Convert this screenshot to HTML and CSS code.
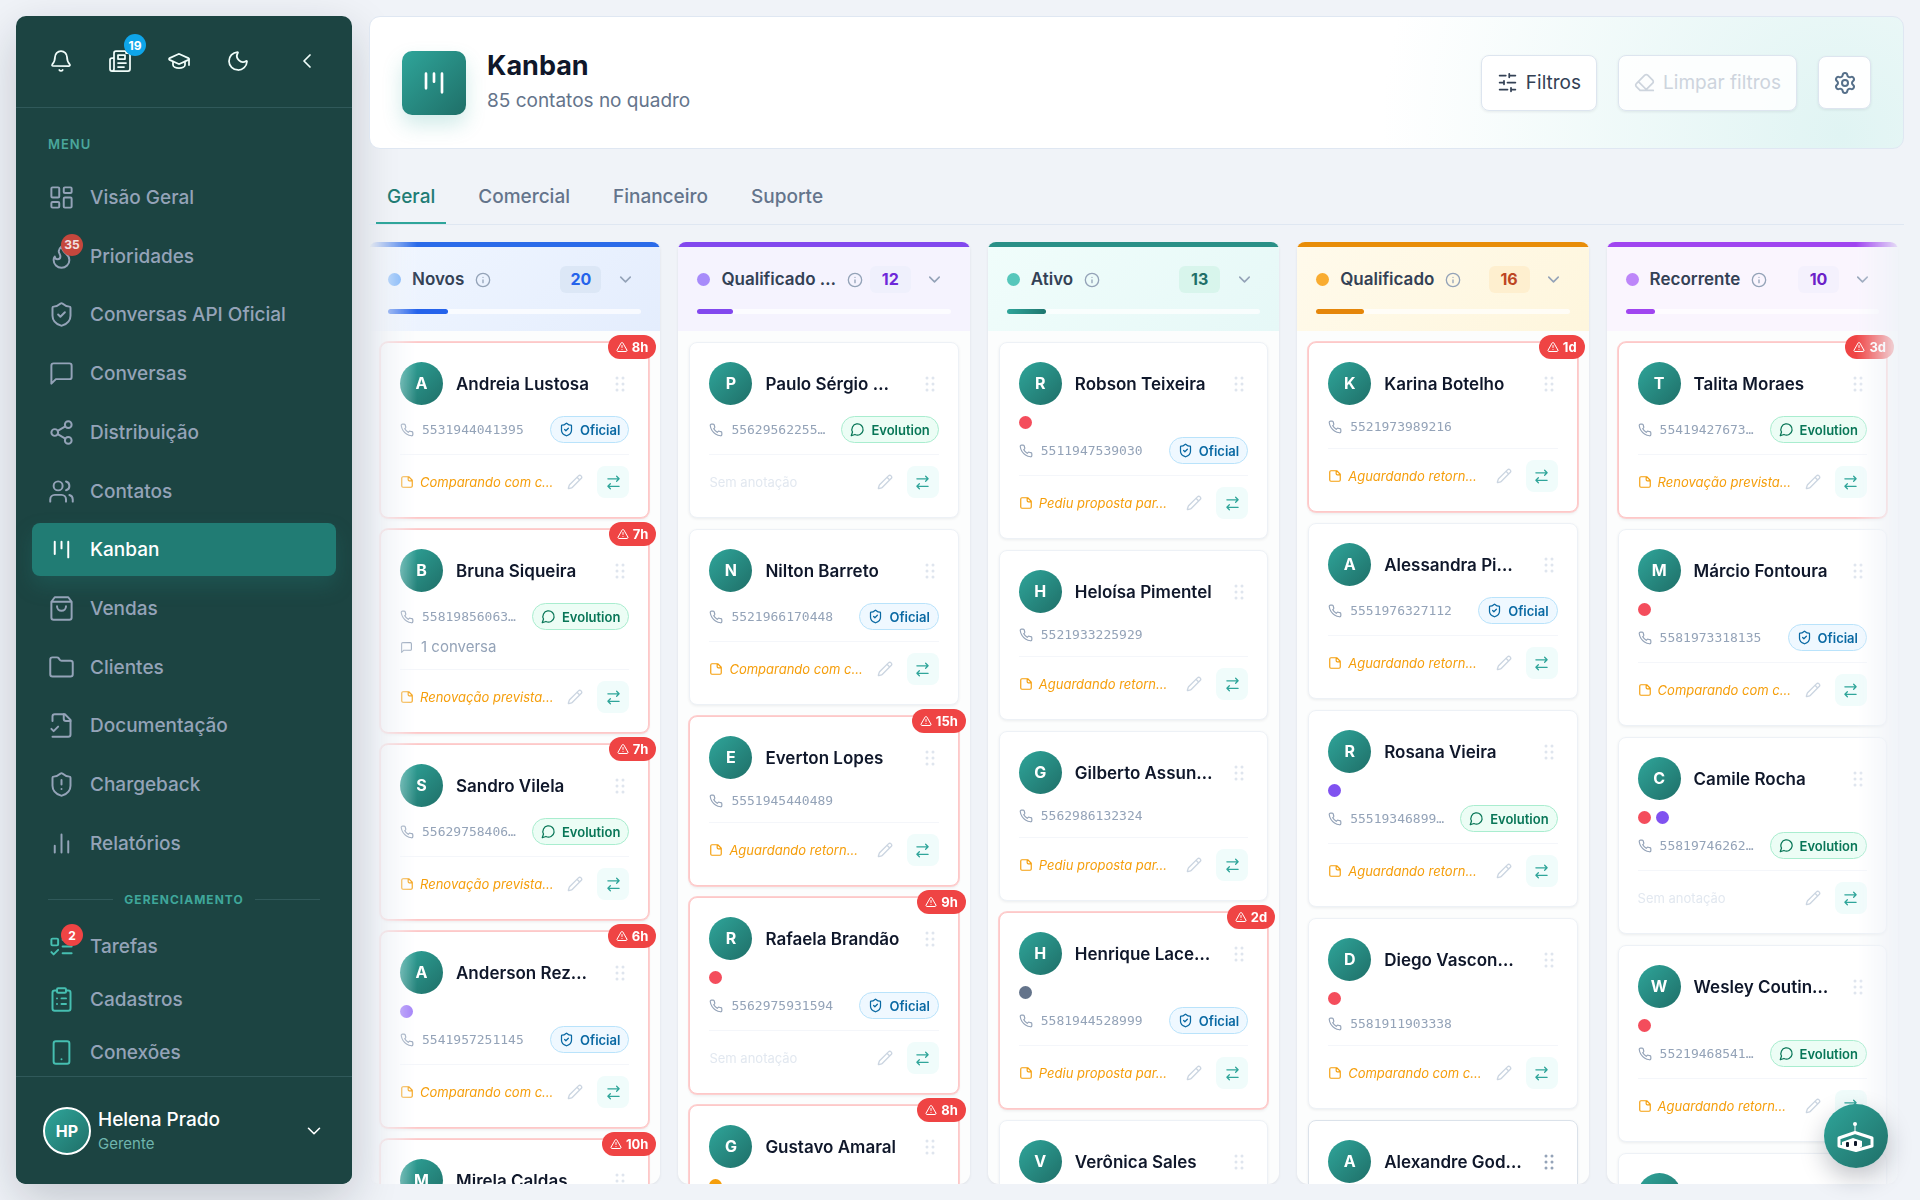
FILE: index.html
```html
<!DOCTYPE html>
<html lang="pt-br">
<head>
    <meta charset="UTF-8">
    <meta name="viewport" content="width=device-width, initial-scale=1.0">
    <title>Kanban</title>
    <link rel="stylesheet" href="styles.css">
</head>
<body>

    <!-- Ícones -->
    <svg class="sprite" aria-hidden="true">
        <symbol id="i-bell" viewBox="0 0 24 24"><path d="M10.3 21a2 2 0 0 0 3.4 0"/><path d="M3.3 15.3A1 1 0 0 0 4 17h16a1 1 0 0 0 .7-1.7C19.4 14 18 12.500 18 8A6 6 0 0 0 6 8c0 4.500-1.400 6-2.700 7.300"/></symbol>
        <symbol id="i-news" viewBox="0 0 24 24"><path d="M4 22h16a2 2 0 0 0 2-2V6a2 2 0 0 0-2-2h-2V3a1 1 0 0 0-1-1H8a2 2 0 0 0-2 2v16a2 2 0 0 1-4 0v-9c0-1.100.9-2 2-2h2"/><path d="M10 6h7v4h-7zM10 14h8M10 18h6"/></symbol>
        <symbol id="i-cap" viewBox="0 0 24 24"><path d="M21.400 10.900a1 1 0 0 0 0-1.800L12.800 5.200a2 2 0 0 0-1.700 0L2.600 9.100a1 1 0 0 0 0 1.800l8.600 3.900a2 2 0 0 0 1.700 0z"/><path d="M22 10v6"/><path d="M6 12.500V16a6 3 0 0 0 12 0v-3.500"/></symbol>
        <symbol id="i-moon" viewBox="0 0 24 24"><path d="M20.985 12.486a9 9 0 1 1-9.473-9.472c.405-.022.617.46.402.803a6 6 0 0 0 8.268 8.268c.344-.215.825-.004.803.401"/></symbol>
        <symbol id="i-left" viewBox="0 0 24 24"><path d="m15 18-6-6 6-6"/></symbol>
        <symbol id="i-down" viewBox="0 0 24 24"><path d="m6 9 6 6 6-6"/></symbol>
        <symbol id="i-dash" viewBox="0 0 24 24"><rect x="3" y="3" width="7" height="9" rx="1"/><rect x="14" y="3" width="7" height="5" rx="1"/><rect x="14" y="12" width="7" height="9" rx="1"/><rect x="3" y="16" width="7" height="5" rx="1"/></symbol>
        <symbol id="i-flame" viewBox="0 0 24 24"><path d="M8.500 14.500A2.500 2.500 0 0 0 11 12c0-1.380-.5-2-1-3-1.072-2.143-.224-4.054 2-6 .5 2.500 2 4.900 4 6.500 2 1.600 3 3.500 3 5.500a7 7 0 1 1-14 0c0-1.153.433-2.294 1-3a2.500 2.500 0 0 0 2.500 2.500z"/></symbol>
        <symbol id="i-shield-check" viewBox="0 0 24 24"><path d="M20 13c0 5-3.500 7.500-7.660 8.950a1 1 0 0 1-.67-.01C7.500 20.500 4 18 4 13V6a1 1 0 0 1 1-1c2 0 4.500-1.200 6.240-2.720a1.170 1.170 0 0 1 1.520 0C14.510 3.810 17 5 19 5a1 1 0 0 1 1 1z"/><path d="m9 12 2 2 4-4"/></symbol>
        <symbol id="i-shield-alert" viewBox="0 0 24 24"><path d="M20 13c0 5-3.500 7.500-7.660 8.950a1 1 0 0 1-.67-.01C7.500 20.500 4 18 4 13V6a1 1 0 0 1 1-1c2 0 4.500-1.200 6.240-2.720a1.170 1.170 0 0 1 1.520 0C14.510 3.810 17 5 19 5a1 1 0 0 1 1 1z"/><path d="M12 8v4M12 16h.01"/></symbol>
        <symbol id="i-message" viewBox="0 0 24 24"><path d="M21 15a2 2 0 0 1-2 2H7l-4 4V5a2 2 0 0 1 2-2h14a2 2 0 0 1 2 2z"/></symbol>
        <symbol id="i-share" viewBox="0 0 24 24"><circle cx="18" cy="5" r="3"/><circle cx="6" cy="12" r="3"/><circle cx="18" cy="19" r="3"/><path d="m8.600 13.500 6.800 4M15.400 6.500l-6.800 4"/></symbol>
        <symbol id="i-users" viewBox="0 0 24 24"><path d="M16 21v-2a4 4 0 0 0-4-4H6a4 4 0 0 0-4 4v2"/><circle cx="9" cy="7" r="4"/><path d="M22 21v-2a4 4 0 0 0-3-3.870M16 3.130a4 4 0 0 1 0 7.750"/></symbol>
        <symbol id="i-kanban" viewBox="0 0 24 24"><path d="M6 5v11M12 5v6M18 5v14"/></symbol>
        <symbol id="i-bag" viewBox="0 0 24 24"><path d="M6 2 3 6v14a2 2 0 0 0 2 2h14a2 2 0 0 0 2-2V6l-3-4zM3 6h18"/><path d="M16 10a4 4 0 0 1-8 0"/></symbol>
        <symbol id="i-folder" viewBox="0 0 24 24"><path d="M20 20a2 2 0 0 0 2-2V8a2 2 0 0 0-2-2h-7.900a2 2 0 0 1-1.690-.9L9.600 3.900A2 2 0 0 0 7.930 3H4a2 2 0 0 0-2 2v13a2 2 0 0 0 2 2z"/></symbol>
        <symbol id="i-file-check" viewBox="0 0 24 24"><path d="M4 22h14a2 2 0 0 0 2-2V7l-5-5H6a2 2 0 0 0-2 2v4"/><path d="M14 2v4a2 2 0 0 0 2 2h4M3 15l2 2 4-4"/></symbol>
        <symbol id="i-bars" viewBox="0 0 24 24"><path d="M18 20V10M12 20V4M6 20v-6"/></symbol>
        <symbol id="i-todo" viewBox="0 0 24 24"><rect x="3" y="5" width="6" height="6" rx="1"/><path d="m3 17 2 2 4-4M13 6h8M13 12h8M13 18h8"/></symbol>
        <symbol id="i-clipboard" viewBox="0 0 24 24"><rect x="8" y="2" width="8" height="4" rx="1"/><path d="M16 4h2a2 2 0 0 1 2 2v14a2 2 0 0 1-2 2H6a2 2 0 0 1-2-2V6a2 2 0 0 1 2-2h2M12 11h4M12 16h4M8 11h.01M8 16h.01"/></symbol>
        <symbol id="i-phone-device" viewBox="0 0 24 24"><rect x="5" y="2" width="14" height="20" rx="2"/><path d="M12 18h.01"/></symbol>
        <symbol id="i-sliders" viewBox="0 0 24 24"><path d="M21 4h-7M10 4H3M21 12h-9M8 12H3M21 20h-5M12 20H3M14 2v4M8 10v4M16 18v4"/></symbol>
        <symbol id="i-eraser" viewBox="0 0 24 24"><path d="m7 21-4.300-4.300c-1-1-1-2.500 0-3.400l9.600-9.600c1-1 2.500-1 3.400 0l5.600 5.600c1 1 1 2.500 0 3.400L13 21M22 21H7M5 11l9 9"/></symbol>
        <symbol id="i-gear" viewBox="0 0 24 24"><path d="M9.670 4.140a2.340 2.340 0 0 1 4.660 0 2.340 2.340 0 0 0 3.320 1.910 2.340 2.340 0 0 1 2.330 4.030 2.340 2.340 0 0 0 0 3.830 2.340 2.340 0 0 1-2.330 4.030 2.340 2.340 0 0 0-3.320 1.920 2.340 2.340 0 0 1-4.660 0 2.340 2.340 0 0 0-3.320-1.910 2.340 2.340 0 0 1-2.330-4.030 2.340 2.340 0 0 0 0-3.830 2.340 2.340 0 0 1 2.330-4.030 2.340 2.340 0 0 0 3.320-1.910"/><circle cx="12" cy="12" r="3"/></symbol>
        <symbol id="i-info" viewBox="0 0 24 24"><circle cx="12" cy="12" r="10"/><path d="M12 16v-4M12 8h.01"/></symbol>
        <symbol id="i-alert" viewBox="0 0 24 24"><path d="m21.730 18-8-14a2 2 0 0 0-3.480 0l-8 14A2 2 0 0 0 4 21h16a2 2 0 0 0 1.730-3M12 9v4M12 17h.01"/></symbol>
        <symbol id="i-grip" viewBox="0 0 24 24"><path d="M8 4h.01M8 12h.01M8 20h.01M16 4h.01M16 12h.01M16 20h.01"/></symbol>
        <symbol id="i-phone" viewBox="0 0 24 24"><path d="M22 16.920v3a2 2 0 0 1-2.180 2 19.790 19.790 0 0 1-8.630-3.070 19.500 19.500 0 0 1-6-6 19.790 19.790 0 0 1-3.070-8.670A2 2 0 0 1 4.110 2h3a2 2 0 0 1 2 1.720 12.840 12.840 0 0 0 .7 2.810 2 2 0 0 1-.45 2.110L8.090 9.910a16 16 0 0 0 6 6l1.270-1.270a2 2 0 0 1 2.110-.45 12.840 12.840 0 0 0 2.810.7A2 2 0 0 1 22 16.920z"/></symbol>
        <symbol id="i-bubble" viewBox="0 0 24 24"><path d="M7.900 20A9 9 0 1 0 4 16.100L2 22z"/></symbol>
        <symbol id="i-note" viewBox="0 0 24 24"><path d="M15 3H5a2 2 0 0 0-2 2v14a2 2 0 0 0 2 2h14a2 2 0 0 0 2-2V9zM14 3v5a2 2 0 0 0 2 2h5"/></symbol>
        <symbol id="i-pencil" viewBox="0 0 24 24"><path d="M21.170 6.810a1 1 0 0 0-3.980-3.980L3.840 16.170a2 2 0 0 0-.5.830l-1.320 4.350a.5.5 0 0 0 .62.620l4.350-1.320a2 2 0 0 0 .83-.5zM15 5l4 4"/></symbol>
        <symbol id="i-swap" viewBox="0 0 24 24"><path d="m17 2 4 4-4 4M3 6h18M7 22l-4-4 4-4M21 18H3"/></symbol>
    </svg>

    <!-- Menu lateral -->
    <aside class="sidebar">
        <div class="sidebar-top">
            <button class="top-btn" aria-label="Notificações"><svg class="icon"><use href="#i-bell"/></svg></button>
            <button class="top-btn" aria-label="Novidades"><svg class="icon"><use href="#i-news"/></svg><span class="badge badge-blue">19</span></button>
            <button class="top-btn" aria-label="Treinamentos"><svg class="icon"><use href="#i-cap"/></svg></button>
            <button class="top-btn" aria-label="Tema"><svg class="icon"><use href="#i-moon"/></svg></button>
            <button class="top-btn top-btn-end" aria-label="Recolher"><svg class="icon"><use href="#i-left"/></svg></button>
        </div>

        <nav class="menu">
            <p class="menu-label">MENU</p>
            <ul class="menu-list">
                <li><a class="menu-item" href="#"><span class="menu-icon"><svg class="icon"><use href="#i-dash"/></svg></span>Visão Geral</a></li>
                <li><a class="menu-item" href="#"><span class="menu-icon"><svg class="icon"><use href="#i-flame"/></svg><span class="badge badge-muted">35</span></span>Prioridades</a></li>
                <li><a class="menu-item" href="#"><span class="menu-icon"><svg class="icon"><use href="#i-shield-check"/></svg></span>Conversas API Oficial</a></li>
                <li><a class="menu-item" href="#"><span class="menu-icon"><svg class="icon"><use href="#i-message"/></svg></span>Conversas</a></li>
                <li><a class="menu-item" href="#"><span class="menu-icon"><svg class="icon"><use href="#i-share"/></svg></span>Distribuição</a></li>
                <li><a class="menu-item" href="#"><span class="menu-icon"><svg class="icon"><use href="#i-users"/></svg></span>Contatos</a></li>
                <li><a class="menu-item active" href="#"><span class="menu-icon"><svg class="icon"><use href="#i-kanban"/></svg></span>Kanban</a></li>
                <li><a class="menu-item" href="#"><span class="menu-icon"><svg class="icon"><use href="#i-bag"/></svg></span>Vendas</a></li>
                <li><a class="menu-item" href="#"><span class="menu-icon"><svg class="icon"><use href="#i-folder"/></svg></span>Clientes</a></li>
                <li><a class="menu-item" href="#"><span class="menu-icon"><svg class="icon"><use href="#i-file-check"/></svg></span>Documentação</a></li>
                <li><a class="menu-item" href="#"><span class="menu-icon"><svg class="icon"><use href="#i-shield-alert"/></svg></span>Chargeback</a></li>
                <li><a class="menu-item" href="#"><span class="menu-icon"><svg class="icon"><use href="#i-bars"/></svg></span>Relatórios</a></li>
            </ul>
            <p class="menu-divider">GERENCIAMENTO</p>
            <ul class="menu-manage">
                <li><a class="menu-item" href="#"><span class="menu-icon"><svg class="icon"><use href="#i-todo"/></svg><span class="badge badge-red">2</span></span>Tarefas</a></li>
                <li><a class="menu-item" href="#"><span class="menu-icon"><svg class="icon"><use href="#i-clipboard"/></svg></span>Cadastros</a></li>
                <li><a class="menu-item" href="#"><span class="menu-icon"><svg class="icon"><use href="#i-phone-device"/></svg></span>Conexões</a></li>
            </ul>
        </nav>

        <button class="user">
            <span class="user-avatar">HP</span>
            <span class="user-info">
                <span class="user-name">Helena Prado</span>
                <span class="user-role">Gerente</span>
            </span>
            <svg class="icon"><use href="#i-down"/></svg>
        </button>
    </aside>

    <main class="main">
        <header class="page-header">
            <div class="page-icon"><svg class="icon"><use href="#i-kanban"/></svg></div>
            <div class="page-title">
                <h1>Kanban</h1>
                <p>85 contatos no quadro</p>
            </div>
            <div class="actions">
                <button class="btn"><svg class="icon"><use href="#i-sliders"/></svg>Filtros</button>
                <button class="btn" disabled><svg class="icon"><use href="#i-eraser"/></svg>Limpar filtros</button>
                <button class="btn btn-square" aria-label="Configurações"><svg class="icon"><use href="#i-gear"/></svg></button>
            </div>
        </header>

        <nav class="tabs">
            <a class="tab active" href="#">Geral</a>
            <a class="tab" href="#">Comercial</a>
            <a class="tab" href="#">Financeiro</a>
            <a class="tab" href="#">Suporte</a>
        </nav>

        <div class="board" id="board"></div>
    </main>

    <button class="fab" aria-label="Assistente">
        <svg viewBox="0 0 64 64">
            <path class="robot-line" d="M31 20v8"/>
            <circle class="robot-fill" cx="31" cy="20" r="2"/>
            <path class="robot-frame" d="M15 34 31 28.500 48 34v8L32 46.500 15 42z"/>
            <path class="robot-fill" d="M18 38 29 34l9 3v5.500l-6 4-14-4z"/>
            <rect class="robot-eye" x="22" y="38" width="3" height="5" rx="1"/>
            <rect class="robot-eye" x="30" y="37" width="3" height="5" rx="1"/>
        </svg>
    </button>

    <script src="script.js"></script>
</body>
</html>
```

FILE: styles.css
```css
* {
    margin: 0;
    padding: 0;
    box-sizing: border-box;
}
body {
    height: 100vh;
    display: flex;
    gap: 17px;
    padding: 16px;
    overflow: hidden;
    background-color: #f0f3f8;
    font-family: Inter, sans-serif;
    color: #0f172a;
}
button {
    font-family: inherit;
    border: none;
    background: none;
    cursor: pointer;
}
a {
    text-decoration: none;
    color: inherit;
}
ul {
    list-style: none;
}
.sprite {
    display: none;
}
.icon {
    flex: none;
    width: 24px;
    height: 24px;
    fill: none;
    stroke: currentColor;
    stroke-width: 2;
    stroke-linecap: round;
    stroke-linejoin: round;
}

/* Menu lateral */
.sidebar {
    flex: none;
    width: 336px;
    display: flex;
    flex-direction: column;
    overflow: hidden;
    border-radius: 10px;
    background-color: #1c4442;
    box-shadow: 0 16px 48px rgba(15, 23, 42, 0.2);
}
.sidebar-top {
    flex: none;
    height: 92px;
    display: flex;
    align-items: center;
    gap: 16px;
    padding: 0 24px 2px 23px;
    border-bottom: 1px solid #30595a;
}
.top-btn {
    position: relative;
    width: 43px;
    height: 43px;
    display: flex;
    align-items: center;
    justify-content: center;
    color: #f0fdfa;
}
.top-btn .icon {
    stroke-width: 1.75;
}
.top-btn-end {
    margin-left: auto;
}
.badge {
    position: absolute;
    display: flex;
    align-items: center;
    justify-content: center;
    min-width: 22px;
    height: 22px;
    border-radius: 11px;
    color: #fff;
    font-size: 12px;
    font-weight: 700;
}
.badge-blue {
    top: -5px;
    right: -5px;
    background-color: #0ea5e9;
}
.badge-red, .badge-muted {
    top: -9px;
    right: -8px;
    background-color: #ef4444;
}
.badge-muted {
    background-color: #c5473d;
    color: #f1e0e2;
}
.menu {
    flex: 1;
    min-height: 0;
    overflow: hidden;
    padding: 27px 16px 0;
}
.menu-label {
    padding: 0 16px;
    margin-bottom: 18px;
    color: #4aa79c;
    font-size: 13px;
    font-weight: 600;
    line-height: 18px;
    letter-spacing: 1px;
}
.menu-list {
    height: 699px;
    display: flex;
    flex-direction: column;
    justify-content: space-between;
}
.menu-item {
    height: 53px;
    display: flex;
    align-items: center;
    gap: 15px;
    padding: 0 16px;
    border-radius: 8px;
    color: #94a3b8;
    font-size: 19px;
    font-weight: 500;
}
.menu-icon {
    position: relative;
    display: flex;
}
.menu-icon .icon {
    width: 27px;
    height: 27px;
    stroke-width: 1.75;
}
.menu-item.active {
    background-color: #217c74;
    color: #fff;
    box-shadow: 0 10px 20px rgba(33, 124, 116, 0.3);
}
.menu-divider {
    height: 50px;
    display: flex;
    align-items: center;
    gap: 11px;
    padding: 8px 16px 0;
    color: #3fa79b;
    font-size: 12px;
    font-weight: 700;
    letter-spacing: 1px;
}
.menu-divider::before, .menu-divider::after {
    content: "";
    flex: 1;
    height: 1px;
    background-color: #30595a;
}
.menu-manage .icon {
    color: #46bfb1;
}
.user {
    flex: none;
    height: 108px;
    display: flex;
    align-items: center;
    gap: 7px;
    padding: 0 27px;
    border-top: 1px solid #30595a;
    background-color: #1c4442;
    text-align: left;
    color: #fff;
}
.user .icon {
    margin-left: auto;
    width: 22px;
    height: 22px;
    stroke-width: 1.75;
}
.user-avatar {
    flex: none;
    width: 48px;
    height: 48px;
    display: flex;
    align-items: center;
    justify-content: center;
    border: 2px solid #fff;
    border-radius: 50%;
    background: linear-gradient(135deg, #2fa59a, #1f6f68);
    font-size: 16px;
    font-weight: 700;
}
.user-info {
    display: flex;
    flex-direction: column;
}
.user-name {
    font-size: 19px;
    font-weight: 500;
    line-height: 26px;
}
.user-role {
    color: #6fb5ad;
    font-size: 15px;
    line-height: 21px;
}

/* Cabeçalho */
.main {
    flex: 1;
    min-width: 0;
    display: flex;
    flex-direction: column;
}
.page-header {
    flex: none;
    display: flex;
    align-items: center;
    gap: 21px;
    padding: 30px 32px;
    border: 1px solid #dfe7f2;
    border-radius: 11px;
    background: radial-gradient(circle at 96% 90%, #e0f4f3, rgba(224, 244, 243, 0.6) 180px, rgba(255, 255, 255, 0) 460px), #fff;
}
.page-icon {
    width: 64px;
    height: 64px;
    display: flex;
    align-items: center;
    justify-content: center;
    border-radius: 10px;
    background: linear-gradient(135deg, #2fa59a, #1f6f68);
    box-shadow: 0 10px 20px rgba(47, 165, 154, 0.22);
    color: #fff;
}
.page-icon .icon {
    width: 32px;
    height: 32px;
    stroke-width: 2;
}
.page-title h1 {
    font-size: 27px;
    font-weight: 700;
    line-height: 37px;
}
.page-title p {
    color: #64748b;
    font-size: 19px;
    line-height: 34px;
}
.actions {
    margin-left: auto;
    display: flex;
    align-items: center;
    gap: 21px;
}
.btn {
    height: 56px;
    display: flex;
    align-items: center;
    gap: 8px;
    padding: 0 15px;
    border: 1px solid #dde5ef;
    border-radius: 8px;
    background-color: rgba(255, 255, 255, 0.95);
    box-shadow: 0 1px 3px rgba(15, 23, 42, 0.08);
    color: #334155;
    font-size: 19px;
}
.btn .icon {
    width: 21px;
    height: 21px;
}
.btn:disabled {
    color: #cdd4dd;
    background-color: rgba(255, 255, 255, 0.85);
}
.btn-square {
    width: 53px;
    height: 53px;
    padding: 0;
    justify-content: center;
    color: #56708a;
}
.btn-square .icon {
    width: 24px;
    height: 24px;
}

/* Abas */
.tabs {
    flex: none;
    display: flex;
    gap: 21px;
    margin-top: 22px;
    padding: 0 7px;
    border-bottom: 1px solid #dfe7f2;
}
.tab {
    padding: 0 11px;
    line-height: 51px;
    border-bottom: 2px solid transparent;
    color: #64748b;
    font-size: 19px;
    font-weight: 500;
}
.tab.active {
    color: #217c74;
    border-color: #2fa59a;
}

/* Quadro */
.board {
    flex: 1;
    min-height: 0;
    display: grid;
    grid-template-columns: repeat(5, 1fr);
    grid-template-rows: 100%;
    gap: 18px;
    margin-top: 17px;
    padding-right: 6px;
    -webkit-mask-image: linear-gradient(to right, transparent, #000 48px, #000 calc(100% - 48px), transparent);
    mask-image: linear-gradient(to right, transparent, #000 48px, #000 calc(100% - 48px), transparent);
}
.column {
    min-width: 0;
    overflow: hidden;
    border-radius: 8px 8px 11px 11px;
    background-color: #fcfdfd;
    box-shadow: 0 1px 3px rgba(15, 23, 42, 0.08);
}
.column-head {
    height: 89px;
    padding: 19px;
    border-top: 5px solid;
}
.column-row {
    display: flex;
    align-items: center;
    height: 27px;
    margin-bottom: 16px;
}
.column-name {
    flex: 1;
    min-width: 0;
    display: flex;
    align-items: center;
    gap: 11px;
    color: #334155;
}
.column-name h2 {
    font-size: 17px;
    font-weight: 600;
    line-height: 27px;
    white-space: nowrap;
}
.column-name .icon {
    width: 16px;
    height: 16px;
    color: #94a3b8;
}
.dot {
    flex: none;
    width: 13px;
    height: 13px;
    border-radius: 50%;
}
.count {
    flex: none;
    width: 41px;
    border-radius: 6px;
    text-align: center;
    font-size: 16px;
    font-weight: 700;
    line-height: 27px;
}
.toggle {
    width: 32px;
    height: 27px;
    margin-left: 8px;
    display: flex;
    align-items: center;
    justify-content: center;
    color: #94a3b8;
}
.toggle .icon {
    width: 19px;
    height: 19px;
}
.progress {
    height: 5px;
    border-radius: 3px;
    background-color: rgba(255, 255, 255, 0.7);
}
.progress-bar {
    height: 5px;
    border-radius: 3px;
}

/* Cores das colunas */
.blue .column-head { background: linear-gradient(135deg, #f0f6ff, #e4edfd); border-color: #2b6be9; }
.blue .column-name .dot { background-color: #60a5fa; }
.blue .progress-bar { background-color: #2563eb; }
.blue .count { background-color: #dce7f6; color: #2563eb; }

.violet .column-head { background-color: #f5f3fe; border-color: #8248ee; }
.violet .column-name .dot { background-color: #a78bfa; }
.violet .progress-bar { background-color: #8248ee; }
.violet .count { background-color: #eff0fc; color: #6d28d9; }

.teal .column-head { background: linear-gradient(135deg, #f0fdfb, #e6f8f7); border-color: #2a9087; }
.teal .column-name .dot { background-color: #56c7bb; }
.teal .progress-bar { background: linear-gradient(to right, #2fa59a, #1f766f); }
.teal .count { background-color: #d8f5ec; color: #1f6f68; }

.amber .column-head { background: linear-gradient(135deg, #fffaeb, #fef6dd); border-color: #e88d08; }
.amber .column-name .dot { background-color: #f9ac30; }
.amber .progress-bar { background-color: #e5860a; }
.amber .count { background-color: #feefcf; color: #bd4522; }

.purple .column-head { background-color: #faf5fe; border-color: #a045f0; }
.purple .column-name .dot { background-color: #bd86f9; }
.purple .progress-bar { background-color: #a045f0; }
.purple .count { background-color: #f4f1fd; color: #6b21c8; }

/* Cartões */
.cards {
    display: flex;
    flex-direction: column;
    gap: 11px;
    padding: 11px;
}
.card {
    position: relative;
    padding: 19px;
    border: 1px solid #edf1f6;
    border-radius: 8px;
    background-color: #fff;
    box-shadow: 0 1px 3px rgba(15, 23, 42, 0.07);
}
.card.late {
    border-color: #fdc8c8;
    box-shadow: 0 0 0 1px #fdd0d0, 0 2px 3px rgba(15, 23, 42, 0.07);
}
.card.hover {
    border-color: #dbe2ea;
}
.late-tag {
    position: absolute;
    top: -8px;
    right: -8px;
    height: 24px;
    display: flex;
    align-items: center;
    gap: 4px;
    padding: 0 8px;
    border-radius: 12px;
    background-color: #ef4444;
    color: #fff;
    font-size: 13px;
    font-weight: 700;
}
.late-tag .icon {
    width: 12px;
    height: 12px;
}
.card-top {
    display: flex;
    align-items: center;
    height: 43px;
}
.avatar {
    flex: none;
    width: 43px;
    height: 43px;
    margin-right: 13px;
    border-radius: 50%;
    background: linear-gradient(135deg, #2fa59a, #1f6f68);
    color: #fff;
    text-align: center;
    font-size: 16px;
    font-weight: 700;
    line-height: 43px;
}
.card-top h3 {
    flex: 1;
    font-size: 17px;
    font-weight: 600;
    white-space: nowrap;
}
.grip {
    width: 18px;
    height: 18px;
    color: #dfe5ee;
    stroke-width: 4;
}
.hover .grip {
    color: #94a3b8;
}
.tags {
    display: flex;
    gap: 5px;
    margin-top: 11px;
}
.tags + .contact {
    margin-top: 8px;
}
.dot.red { background-color: #f44d5c; }
.dot.lilac { background-color: #a07cf8; }
.dot.indigo { background-color: #8052f0; }
.dot.slate { background-color: #64748b; }
.dot.orange { background-color: #f59e0b; }
.contact {
    display: flex;
    align-items: center;
    gap: 8px;
    min-height: 21px;
    margin-top: 11px;
    color: #94a3b8;
}
.contact .icon {
    width: 14px;
    height: 14px;
}
.number {
    font-family: "DejaVu Sans Mono", monospace;
    font-size: 13px;
}
.channel {
    margin-left: auto;
    height: 27px;
    display: flex;
    align-items: center;
    gap: 6px;
    padding: 0 8px;
    border: 1px solid;
    border-radius: 14px;
    font-size: 13px;
    font-weight: 600;
}
.channel .icon {
    width: 15px;
    height: 15px;
}
.channel.oficial {
    border-color: #b9e3fb;
    background-color: #eff8ff;
    color: #0a69a3;
}
.channel.evolution {
    border-color: #a9edcf;
    background-color: #ecfdf5;
    color: #087657;
}
.talks {
    display: flex;
    align-items: center;
    gap: 8px;
    margin-top: 6px;
    color: #94a3b8;
    font-size: 15px;
    line-height: 22px;
}
.talks .icon {
    width: 13px;
    height: 13px;
}
.card-foot {
    display: flex;
    align-items: center;
    margin-top: 11px;
    padding-top: 11px;
    border-top: 1px solid #f4f6fa;
}
.note {
    flex: 1;
    display: flex;
    align-items: center;
    gap: 6px;
    color: #f59e0b;
    font-size: 13px;
    font-style: italic;
    white-space: nowrap;
}
.note .icon {
    width: 14px;
    height: 14px;
}
.note.empty {
    color: #e2e8f0;
    font-style: normal;
}
.edit {
    display: flex;
    margin-right: 14px;
    color: #cbd5e1;
}
.edit .icon {
    width: 16px;
    height: 16px;
}
.swap {
    width: 32px;
    height: 32px;
    display: flex;
    align-items: center;
    justify-content: center;
    border-radius: 8px;
    background-color: #f0fcfb;
    color: #2fa59a;
}
.swap .icon {
    width: 15px;
    height: 15px;
}

/* Assistente */
.fab {
    position: fixed;
    right: 32px;
    bottom: 32px;
    width: 64px;
    height: 64px;
    border-radius: 50%;
    background: linear-gradient(135deg, #2fa59a, #1f6f68);
    box-shadow: 0 10px 24px rgba(15, 23, 42, 0.25);
}
.fab svg {
    display: block;
}
.robot-line {
    fill: none;
    stroke: #fff;
    stroke-width: 1;
}
.robot-frame {
    fill: none;
    stroke: #fff;
    stroke-width: 3;
    stroke-linejoin: round;
}
.robot-fill {
    fill: #fff;
}
.robot-eye {
    fill: #0f172a;
}
```

FILE: script.js
```js
const TOTAL = 85;

const colunas = [
    { nome: 'Novos', cor: 'blue', qtd: 20, cards: [
        { nome: 'Andreia Lustosa', fone: '5531944041395', canal: 'Oficial', nota: 'Comparando com c…', atraso: '8h' },
        { nome: 'Bruna Siqueira', fone: '55819856063…', canal: 'Evolution', conversas: '1 conversa', nota: 'Renovação prevista…', atraso: '7h' },
        { nome: 'Sandro Vilela', fone: '55629758406…', canal: 'Evolution', nota: 'Renovação prevista…', atraso: '7h' },
        { nome: 'Anderson Rez…', tags: ['lilac'], fone: '5541957251145', canal: 'Oficial', nota: 'Comparando com c…', atraso: '6h' },
        { nome: 'Mirela Caldas', atraso: '10h' }
    ] },
    { nome: 'Qualificado …', cor: 'violet', qtd: 12, cards: [
        { nome: 'Paulo Sérgio …', fone: '55629562255…', canal: 'Evolution' },
        { nome: 'Nilton Barreto', fone: '5521966170448', canal: 'Oficial', nota: 'Comparando com c…' },
        { nome: 'Everton Lopes', fone: '5551945440489', nota: 'Aguardando retorn…', atraso: '15h' },
        { nome: 'Rafaela Brandão', tags: ['red'], fone: '5562975931594', canal: 'Oficial', atraso: '9h' },
        { nome: 'Gustavo Amaral', tags: ['orange'], atraso: '8h' }
    ] },
    { nome: 'Ativo', cor: 'teal', qtd: 13, cards: [
        { nome: 'Robson Teixeira', tags: ['red'], fone: '5511947539030', canal: 'Oficial', nota: 'Pediu proposta par…' },
        { nome: 'Heloísa Pimentel', fone: '5521933225929', nota: 'Aguardando retorn…' },
        { nome: 'Gilberto Assun…', fone: '5562986132324', nota: 'Pediu proposta par…' },
        { nome: 'Henrique Lace…', tags: ['slate'], fone: '5581944528999', canal: 'Oficial', nota: 'Pediu proposta par…', atraso: '2d' },
        { nome: 'Verônica Sales' }
    ] },
    { nome: 'Qualificado', cor: 'amber', qtd: 16, cards: [
        { nome: 'Karina Botelho', fone: '5521973989216', nota: 'Aguardando retorn…', atraso: '1d' },
        { nome: 'Alessandra Pi…', fone: '5551976327112', canal: 'Oficial', nota: 'Aguardando retorn…' },
        { nome: 'Rosana Vieira', tags: ['indigo'], fone: '55519346899…', canal: 'Evolution', nota: 'Aguardando retorn…' },
        { nome: 'Diego Vascon…', tags: ['red'], fone: '5581911903338', nota: 'Comparando com c…' },
        { nome: 'Alexandre God…', hover: true }
    ] },
    { nome: 'Recorrente', cor: 'purple', qtd: 10, cards: [
        { nome: 'Talita Moraes', fone: '55419427673…', canal: 'Evolution', nota: 'Renovação prevista…', atraso: '3d' },
        { nome: 'Márcio Fontoura', tags: ['red'], fone: '5581973318135', canal: 'Oficial', nota: 'Comparando com c…' },
        { nome: 'Camile Rocha', tags: ['red', 'indigo'], fone: '55819746262…', canal: 'Evolution' },
        { nome: 'Wesley Coutin…', tags: ['red'], fone: '55219468541…', canal: 'Evolution', nota: 'Aguardando retorn…' },
        { nome: '' }
    ] }
];

function icone(id, classe = '') {
    return `<svg class="icon ${classe}"><use href="#i-${id}"/></svg>`;
}

function montarCard(c) {
    const canal = c.canal
        ? `<span class="channel ${c.canal.toLowerCase()}">${icone(c.canal === 'Oficial' ? 'shield-check' : 'bubble')}${c.canal}</span>`
        : '';
    const nota = c.nota
        ? `<p class="note">${icone('note')}${c.nota}</p>`
        : '<p class="note empty">Sem anotação</p>';

    // Sem telefone, o cartão só aparece até o nome no fim da coluna
    const corpo = c.fone ? `
        <div class="contact">${icone('phone')}<span class="number">${c.fone}</span>${canal}</div>
        ${c.conversas ? `<p class="talks">${icone('message')}${c.conversas}</p>` : ''}
        <div class="card-foot">
            ${nota}
            <button class="edit" aria-label="Editar anotação">${icone('pencil')}</button>
            <button class="swap" aria-label="Mover contato">${icone('swap')}</button>
        </div>` : '<div class="contact"></div><div class="card-foot"></div>';

    return `
        <article class="card ${c.atraso ? 'late' : ''} ${c.hover ? 'hover' : ''}">
            ${c.atraso ? `<span class="late-tag">${icone('alert')}${c.atraso}</span>` : ''}
            <div class="card-top">
                <span class="avatar">${c.nome.charAt(0)}</span>
                <h3>${c.nome}</h3>
                ${icone('grip', 'grip')}
            </div>
            ${c.tags ? `<div class="tags">${c.tags.map(t => `<span class="dot ${t}"></span>`).join('')}</div>` : ''}
            ${corpo}
        </article>`;
}

function montarColuna(col) {
    return `
        <section class="column ${col.cor}">
            <div class="column-head">
                <div class="column-row">
                    <div class="column-name"><span class="dot"></span><h2>${col.nome}</h2>${icone('info')}</div>
                    <span class="count">${col.qtd}</span>
                    <button class="toggle" aria-label="Opções da coluna">${icone('down')}</button>
                </div>
                <div class="progress"><div class="progress-bar" style="width: ${col.qtd / TOTAL * 100}%"></div></div>
            </div>
            <div class="cards">${col.cards.map(montarCard).join('')}</div>
        </section>`;
}

document.getElementById('board').innerHTML = colunas.map(montarColuna).join('');
```
